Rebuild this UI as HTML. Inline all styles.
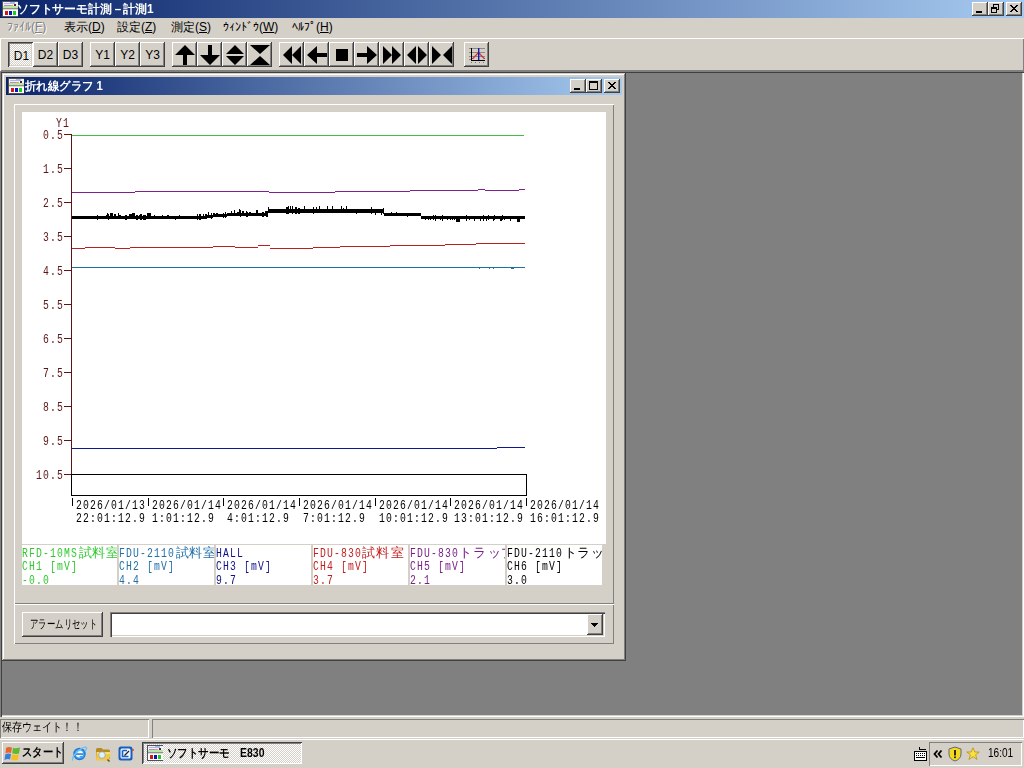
<!DOCTYPE html>
<html><head><meta charset="utf-8">
<style>
*{margin:0;padding:0;box-sizing:border-box}
html,body{width:1024px;height:768px;overflow:hidden;background:#D4D0C8;font-family:"Liberation Sans",sans-serif;font-size:12px;color:#000}
.a{position:absolute}
.face{background:#D4D0C8}
.btn{position:absolute;background:#D4D0C8;box-shadow:inset -1px -1px #404040,inset 1px 1px #fff,inset -2px -2px #808080,inset 2px 2px #D4D0C8}
.btnp{position:absolute;background-color:#fff;background-image:repeating-conic-gradient(#D4D0C8 0 25%,#fff 0 50%);background-size:2px 2px;box-shadow:inset 1px 1px #404040,inset -1px -1px #fff,inset 2px 2px #808080,inset -2px -2px #D4D0C8}
.tb{position:absolute;left:0;top:1px;width:25px;font-size:12px;line-height:25px;text-align:center}
.mono{font-family:"Liberation Mono",monospace;font-size:13px;letter-spacing:1.53px;white-space:pre;line-height:13px;transform:scaleX(0.75);transform-origin:0 0}
.tbtn{position:absolute;width:16px;height:14px;background:#D4D0C8;box-shadow:inset -1px -1px #404040,inset 1px 1px #fff,inset -2px -2px #808080}
.cell{top:545px;width:95px;height:40px;background:#fff;overflow:hidden;font-family:"Liberation Mono",monospace;font-size:13px;letter-spacing:1.53px;white-space:pre;line-height:13.5px}
.cell>div{transform:scaleX(0.75);transform-origin:0 0}
.j{display:inline-block;width:18.67px;text-align:center;letter-spacing:0;font-size:13px;font-weight:normal;transform:scaleX(1.333)}
.k{display:inline-block;width:1em;text-align:center}
.h{display:inline-block;width:0.5em;text-align:center}
</style></head><body>

<!-- main title bar -->
<div class="a" style="left:0;top:0;width:1024px;height:18px;background:linear-gradient(to right,#0A246A,#A6CAF0)"></div>
<div class="a" style="left:2px;top:1px;width:16px;height:16px"><svg width="16" height="16" viewBox="0 0 16 16" shape-rendering="crispEdges"><rect x="0" y="0" width="16" height="16" fill="#50505a"/><rect x="1" y="1" width="15" height="6" fill="#f4f0f8"/><rect x="2" y="2" width="6" height="1" fill="#c0b0e0"/><rect x="8" y="1" width="5" height="2" fill="#a8b8e8"/><rect x="2" y="4" width="6" height="1" fill="#a890c8"/><rect x="8" y="4" width="3" height="1" fill="#e0a060"/><rect x="12" y="3" width="2" height="2" fill="#502040"/><rect x="1" y="5" width="15" height="2" fill="#b8e8a8"/><rect x="1" y="7" width="15" height="1" fill="#909088"/><rect x="1" y="8" width="15" height="1" fill="#d8d8d0"/><rect x="1" y="9" width="15" height="6" fill="#fff"/><rect x="3" y="10" width="3" height="4" fill="#d01818"/><rect x="7" y="10" width="3" height="4" fill="#1010c0"/><rect x="11" y="10" width="3" height="4" fill="#18d018"/></svg></div>
<div class="a" style="left:17px;top:2px;height:14px;line-height:14px;color:#fff;font-weight:bold;font-size:12px;white-space:nowrap;transform:scaleX(0.985);transform-origin:0 0"><span class="k">ソ</span><span class="k">フ</span><span class="k">ト</span><span class="k">サ</span><span class="k">ー</span><span class="k">モ</span><span class="k">計</span><span class="k">測</span><span class="k">－</span><span class="k">計</span><span class="k">測</span>1</div>
<div class="tbtn" style="left:972px;top:2px"><svg class="a" style="left:0;top:0" width="16" height="14" shape-rendering="crispEdges"><rect x="4" y="9" width="6" height="2" fill="#000"/></svg></div>
<div class="tbtn" style="left:988px;top:2px"><svg class="a" style="left:0;top:0" width="16" height="14" shape-rendering="crispEdges"><path d="M5 2h6v1h-6zM5 3h1v2h-1zM10 3h1v5h-1zM9 7h1v1h-1z" fill="#000"/><path d="M3 5h6v2h-6zM3 7h1v4h-1zM8 7h1v4h-1zM3 10h6v1h-6z" fill="#000"/></svg></div>
<div class="tbtn" style="left:1006px;top:2px"><svg class="a" style="left:0;top:0" width="16" height="14" shape-rendering="crispEdges"><path d="M4 3h2v1h-2zM10 3h2v1h-2zM5 4h2v1h-2zM9 4h2v1h-2zM6 5h4v1h-4zM7 6h2v1h-2zM6 7h4v1h-4zM5 8h2v1h-2zM9 8h2v1h-2zM4 9h2v1h-2zM10 9h2v1h-2z" fill="#000"/></svg></div>

<!-- menu bar -->
<div class="a" style="left:0;top:18px;width:1024px;height:20px;background:#D4D0C8"></div>

<div class="a" style="left:7px;top:20px;height:14px;line-height:14px;white-space:nowrap;color:#808080;text-shadow:1px 1px #fff;font-size:12px"><span class="h">ﾌ</span><span class="h">ｧ</span><span class="h">ｲ</span><span class="h">ﾙ</span>(<u>F</u>)</div>
<div class="a" style="left:64px;top:20px;height:14px;line-height:14px;white-space:nowrap;font-size:12px"><span class="k">表</span><span class="k">示</span>(<u>D</u>)</div>
<div class="a" style="left:117px;top:20px;height:14px;line-height:14px;white-space:nowrap;font-size:12px"><span class="k">設</span><span class="k">定</span>(<u>Z</u>)</div>
<div class="a" style="left:171px;top:20px;height:14px;line-height:14px;white-space:nowrap;font-size:12px"><span class="k">測</span><span class="k">定</span>(<u>S</u>)</div>
<div class="a" style="left:223px;top:20px;height:14px;line-height:14px;white-space:nowrap;font-size:12px"><span class="h">ｳ</span><span class="h">ｨ</span><span class="h">ﾝ</span><span class="h">ﾄ</span><span class="h">ﾞ</span><span class="h">ｳ</span>(<u>W</u>)</div>
<div class="a" style="left:292px;top:20px;height:14px;line-height:14px;white-space:nowrap;font-size:12px"><span class="h">ﾍ</span><span class="h">ﾙ</span><span class="h">ﾌ</span><span class="h">ﾟ</span>(<u>H</u>)</div>
<!-- toolbar -->
<div class="a" style="left:0;top:38px;width:1024px;height:33px;background:#D4D0C8;box-shadow:inset 1px 1px #fff,inset -1px -1px #808080"></div>

<div class="btnp" style="left:8px;top:42px;width:25px;height:25px"><div class="tb" style="left:1px;top:2px">D1</div></div>
<div class="btn" style="left:33px;top:42px;width:25px;height:25px"><div class="tb">D2</div></div>
<div class="btn" style="left:58px;top:42px;width:25px;height:25px"><div class="tb">D3</div></div>
<div class="btn" style="left:90px;top:42px;width:25px;height:25px"><div class="tb">Y1</div></div>
<div class="btn" style="left:115px;top:42px;width:25px;height:25px"><div class="tb">Y2</div></div>
<div class="btn" style="left:140px;top:42px;width:25px;height:25px"><div class="tb">Y3</div></div>
<div class="btn" style="left:172px;top:42px;width:25px;height:25px"><svg class="a" style="left:0;top:0" width="25" height="25" viewBox="0 0 25 25"><path d="M3 13L13 3L23 13Z M11 13H15V23H11Z" fill="#000"/></svg></div>
<div class="btn" style="left:197px;top:42px;width:25px;height:25px"><svg class="a" style="left:0;top:0" width="25" height="25" viewBox="0 0 25 25"><path d="M11 3H15V13H11Z M3 13H23L13 23Z" fill="#000"/></svg></div>
<div class="btn" style="left:222px;top:42px;width:25px;height:25px"><svg class="a" style="left:0;top:0" width="25" height="25" viewBox="0 0 25 25"><path d="M4 12L13 3L22 12Z M4 14H22L13 23Z" fill="#000"/></svg></div>
<div class="btn" style="left:247px;top:42px;width:25px;height:25px"><svg class="a" style="left:0;top:0" width="25" height="25" viewBox="0 0 25 25"><path d="M3 3H23L13 12Z M13 14L23 23H3Z" fill="#000"/></svg></div>
<div class="btn" style="left:279px;top:42px;width:25px;height:25px"><svg class="a" style="left:0;top:0" width="25" height="25" viewBox="0 0 25 25"><path d="M4 13L13 4V22Z M13 13L22 4V22Z" fill="#000"/></svg></div>
<div class="btn" style="left:304px;top:42px;width:25px;height:25px"><svg class="a" style="left:0;top:0" width="25" height="25" viewBox="0 0 25 25"><path d="M3 13L13 4V22Z M13 11H23V15H13Z" fill="#000"/></svg></div>
<div class="btn" style="left:329px;top:42px;width:25px;height:25px"><svg class="a" style="left:0;top:0" width="25" height="25" viewBox="0 0 25 25"><rect x="7" y="7" width="12" height="12" fill="#000"/></svg></div>
<div class="btn" style="left:354px;top:42px;width:25px;height:25px"><svg class="a" style="left:0;top:0" width="25" height="25" viewBox="0 0 25 25"><path d="M3 11H13V15H3Z M13 4L23 13L13 22Z" fill="#000"/></svg></div>
<div class="btn" style="left:379px;top:42px;width:25px;height:25px"><svg class="a" style="left:0;top:0" width="25" height="25" viewBox="0 0 25 25"><path d="M4 4L13 13L4 22Z M13 4L22 13L13 22Z" fill="#000"/></svg></div>
<div class="btn" style="left:404px;top:42px;width:25px;height:25px"><svg class="a" style="left:0;top:0" width="25" height="25" viewBox="0 0 25 25"><path d="M3 13L12 4V22Z M14 4L23 13L14 22Z" fill="#000"/></svg></div>
<div class="btn" style="left:429px;top:42px;width:25px;height:25px"><svg class="a" style="left:0;top:0" width="25" height="25" viewBox="0 0 25 25"><path d="M3 4L12 13L3 22Z M23 4V22L14 13Z" fill="#000"/></svg></div>
<div class="btn" style="left:464px;top:42px;width:25px;height:25px"><svg class="a" style="left:0;top:0" width="25" height="25" viewBox="0 0 25 25"><g shape-rendering="crispEdges"><rect x="5" y="6" width="16" height="1" fill="#8a8a80"/><rect x="5" y="10" width="16" height="1" fill="#8a8a80"/><rect x="5" y="14" width="16" height="1" fill="#8a8a80"/><rect x="5" y="17" width="2" height="1" fill="#8a8a80"/><rect x="7" y="6" width="1" height="13" fill="#000"/><rect x="7" y="18" width="14" height="1" fill="#000"/><rect x="7" y="20" width="1" height="1" fill="#777"/><rect x="11" y="20" width="1" height="1" fill="#777"/><rect x="15" y="20" width="1" height="1" fill="#777"/><rect x="19" y="20" width="1" height="1" fill="#777"/></g><path d="M8 16.5H9L14.5 10.5L20 16.5H21" stroke="#d03040" stroke-width="1.2" fill="none"/><rect x="14" y="6" width="1.4" height="12" fill="#1818b0"/></svg></div>
<!-- MDI client -->
<div class="a" style="left:0;top:71px;width:1024px;height:646px;background:#808080;box-shadow:inset 1px 1px #808080,inset 2px 2px #404040,inset -1px -1px #fff,inset -2px -2px #D4D0C8"></div>

<!-- child window -->
<div class="a" style="left:2px;top:73px;width:624px;height:588px;background:#D4D0C8;box-shadow:inset -1px -1px #404040,inset 1px 1px #D4D0C8,inset -2px -2px #808080,inset 2px 2px #fff"></div>
<div class="a" style="left:6px;top:77px;width:616px;height:18px;background:linear-gradient(to right,#0A246A,#A6CAF0)"></div>

<div class="a" style="left:8px;top:78px;width:16px;height:16px"><svg width="16" height="16" viewBox="0 0 16 16" shape-rendering="crispEdges"><rect x="0" y="0" width="16" height="16" fill="#50505a"/><rect x="1" y="1" width="15" height="6" fill="#f4f0f8"/><rect x="2" y="2" width="6" height="1" fill="#c0b0e0"/><rect x="8" y="1" width="5" height="2" fill="#a8b8e8"/><rect x="2" y="4" width="6" height="1" fill="#a890c8"/><rect x="8" y="4" width="3" height="1" fill="#e0a060"/><rect x="12" y="3" width="2" height="2" fill="#502040"/><rect x="1" y="5" width="15" height="2" fill="#b8e8a8"/><rect x="1" y="7" width="15" height="1" fill="#909088"/><rect x="1" y="8" width="15" height="1" fill="#d8d8d0"/><rect x="1" y="9" width="15" height="6" fill="#fff"/><rect x="3" y="10" width="3" height="4" fill="#d01818"/><rect x="7" y="10" width="3" height="4" fill="#1010c0"/><rect x="11" y="10" width="3" height="4" fill="#18d018"/></svg></div>
<div class="a" style="left:25px;top:79px;height:14px;line-height:14px;color:#fff;font-weight:bold;font-size:12px;white-space:nowrap;transform:scaleX(0.95);transform-origin:0 0"><span class="k">折</span><span class="k">れ</span><span class="k">線</span><span class="k">グ</span><span class="k">ラ</span><span class="k">フ</span> 1</div>
<div class="tbtn" style="left:570px;top:79px"><svg class="a" style="left:0;top:0" width="16" height="14" shape-rendering="crispEdges"><rect x="4" y="9" width="6" height="2" fill="#000"/></svg></div>
<div class="tbtn" style="left:586px;top:79px"><svg class="a" style="left:0;top:0" width="16" height="14" shape-rendering="crispEdges"><path d="M3 2h9v2h-9zM3 4h1v7h-1zM11 4h1v7h-1zM3 10h9v1h-9z" fill="#000"/></svg></div>
<div class="tbtn" style="left:604px;top:79px"><svg class="a" style="left:0;top:0" width="16" height="14" shape-rendering="crispEdges"><path d="M4 3h2v1h-2zM10 3h2v1h-2zM5 4h2v1h-2zM9 4h2v1h-2zM6 5h4v1h-4zM7 6h2v1h-2zM6 7h4v1h-4zM5 8h2v1h-2zM9 8h2v1h-2zM4 9h2v1h-2zM10 9h2v1h-2z" fill="#000"/></svg></div>
<!-- chart panel -->
<div class="a" style="left:14px;top:104px;width:600px;height:500px;box-shadow:inset 1px 1px #fff,inset -1px -1px #808080"></div>
<div class="a" style="left:22px;top:112px;width:584px;height:432px;background:#fff"></div>
<div class="a" style="left:22px;top:544px;width:584px;height:41px;background:#D4D0C8"></div>
<svg class="a" style="left:0;top:0" width="1024" height="768" shape-rendering="crispEdges">
<rect x="71" y="134" width="1" height="341" fill="#5C1414"/>
<rect x="64" y="134" width="7" height="1" fill="#5C1414"/>
<rect x="64" y="168" width="7" height="1" fill="#5C1414"/>
<rect x="64" y="202" width="7" height="1" fill="#5C1414"/>
<rect x="64" y="236" width="7" height="1" fill="#5C1414"/>
<rect x="64" y="270" width="7" height="1" fill="#5C1414"/>
<rect x="64" y="304" width="7" height="1" fill="#5C1414"/>
<rect x="64" y="338" width="7" height="1" fill="#5C1414"/>
<rect x="64" y="372" width="7" height="1" fill="#5C1414"/>
<rect x="64" y="406" width="7" height="1" fill="#5C1414"/>
<rect x="64" y="440" width="7" height="1" fill="#5C1414"/>
<rect x="64" y="474" width="7" height="1" fill="#5C1414"/>
<rect x="71" y="474" width="456" height="1" fill="#000"/>
<rect x="71" y="495" width="456" height="1" fill="#000"/>
<rect x="71" y="474" width="1" height="22" fill="#000"/>
<rect x="526" y="474" width="1" height="22" fill="#000"/>
<rect x="72" y="498" width="1" height="8" fill="#000"/>
<rect x="148" y="498" width="1" height="8" fill="#000"/>
<rect x="223" y="498" width="1" height="8" fill="#000"/>
<rect x="299" y="498" width="1" height="8" fill="#000"/>
<rect x="375" y="498" width="1" height="8" fill="#000"/>
<rect x="450" y="498" width="1" height="8" fill="#000"/>
<rect x="526" y="498" width="1" height="8" fill="#000"/>
<rect x="72" y="135" width="452" height="1" fill="#40C040"/>
<rect x="72" y="267" width="453" height="1" fill="#2070A0"/><rect x="479" y="268" width="1" height="1" fill="#2070A0"/><rect x="489" y="268" width="1" height="1" fill="#2070A0"/><rect x="493" y="268" width="1" height="1" fill="#2070A0"/><rect x="511" y="268" width="3" height="1" fill="#2070A0"/>
<rect x="72" y="448" width="425" height="1" fill="#101890"/><rect x="497" y="447" width="28" height="1" fill="#101890"/>
<g fill="#802090"><rect x="72" y="192" width="63" height="1"/><rect x="135" y="191" width="134" height="1"/><rect x="269" y="192" width="66" height="1"/><rect x="335" y="191" width="75" height="1"/><rect x="410" y="190" width="68" height="1"/><rect x="478" y="189" width="7" height="1"/><rect x="485" y="190" width="34" height="1"/><rect x="519" y="189" width="6" height="1"/></g><g fill="#B82020"><rect x="72" y="248" width="13" height="1"/><rect x="85" y="247" width="30" height="1"/><rect x="115" y="248" width="15" height="1"/><rect x="130" y="247" width="83" height="1"/><rect x="213" y="246" width="22" height="1"/><rect x="235" y="247" width="23" height="1"/><rect x="258" y="245" width="12" height="1"/><rect x="270" y="248" width="43" height="1"/><rect x="313" y="247" width="27" height="1"/><rect x="340" y="246" width="50" height="1"/><rect x="390" y="245" width="55" height="1"/><rect x="445" y="244" width="31" height="1"/><rect x="476" y="243" width="49" height="1"/></g><g fill="#000"><rect x="72" y="216" width="134" height="3"/><rect x="206" y="215" width="7" height="3"/><rect x="213" y="214" width="14" height="3"/><rect x="227" y="213" width="41" height="3"/><rect x="268" y="209" width="116" height="4"/><rect x="384" y="213" width="37" height="3"/><rect x="421" y="216" width="104" height="3"/><rect x="82" y="216" width="1" height="3"/><rect x="90" y="216" width="1" height="3"/><rect x="97" y="215" width="1" height="5"/><rect x="106" y="215" width="1" height="4"/><rect x="107" y="213" width="1" height="6"/><rect x="108" y="214" width="1" height="6"/><rect x="110" y="213" width="3" height="6"/><rect x="114" y="214" width="2" height="5"/><rect x="118" y="213" width="1" height="6"/><rect x="119" y="215" width="2" height="4"/><rect x="125" y="215" width="2" height="5"/><rect x="129" y="214" width="3" height="5"/><rect x="132" y="213" width="3" height="6"/><rect x="136" y="215" width="2" height="5"/><rect x="139" y="215" width="1" height="4"/><rect x="140" y="214" width="2" height="6"/><rect x="143" y="215" width="3" height="5"/><rect x="147" y="213" width="1" height="6"/><rect x="148" y="213" width="3" height="6"/><rect x="154" y="215" width="1" height="4"/><rect x="162" y="215" width="1" height="4"/><rect x="167" y="215" width="1" height="4"/><rect x="168" y="215" width="1" height="4"/><rect x="175" y="216" width="1" height="4"/><rect x="179" y="215" width="1" height="4"/><rect x="183" y="216" width="1" height="3"/><rect x="197" y="214" width="1" height="6"/><rect x="199" y="214" width="2" height="6"/><rect x="203" y="214" width="1" height="5"/><rect x="205" y="214" width="2" height="5"/><rect x="208" y="212" width="1" height="6"/><rect x="211" y="213" width="1" height="6"/><rect x="213" y="213" width="2" height="4"/><rect x="216" y="213" width="2" height="4"/><rect x="223" y="213" width="1" height="5"/><rect x="225" y="212" width="1" height="6"/><rect x="231" y="211" width="1" height="5"/><rect x="234" y="210" width="1" height="6"/><rect x="237" y="212" width="2" height="4"/><rect x="240" y="210" width="1" height="7"/><rect x="242" y="211" width="2" height="5"/><rect x="246" y="211" width="1" height="6"/><rect x="247" y="212" width="1" height="5"/><rect x="249" y="212" width="2" height="4"/><rect x="256" y="210" width="2" height="6"/><rect x="262" y="212" width="2" height="5"/><rect x="265" y="211" width="1" height="5"/><rect x="266" y="211" width="2" height="6"/><rect x="268" y="207" width="1" height="6"/><rect x="286" y="207" width="2" height="7"/><rect x="288" y="206" width="1" height="8"/><rect x="290" y="206" width="1" height="7"/><rect x="292" y="206" width="1" height="8"/><rect x="295" y="207" width="2" height="7"/><rect x="298" y="208" width="2" height="6"/><rect x="304" y="207" width="1" height="6"/><rect x="308" y="209" width="1" height="4"/><rect x="313" y="207" width="1" height="7"/><rect x="316" y="207" width="1" height="6"/><rect x="333" y="209" width="1" height="4"/><rect x="343" y="208" width="1" height="5"/><rect x="348" y="209" width="1" height="4"/><rect x="356" y="209" width="1" height="5"/><rect x="363" y="209" width="1" height="4"/><rect x="371" y="207" width="1" height="7"/><rect x="375" y="209" width="1" height="6"/><rect x="381" y="209" width="1" height="6"/><rect x="383" y="208" width="1" height="6"/><rect x="387" y="213" width="1" height="3"/><rect x="391" y="212" width="1" height="4"/><rect x="396" y="212" width="1" height="4"/><rect x="404" y="213" width="1" height="3"/><rect x="407" y="213" width="1" height="4"/><rect x="419" y="213" width="1" height="3"/><rect x="425" y="216" width="1" height="4"/><rect x="428" y="216" width="1" height="4"/><rect x="430" y="216" width="1" height="4"/><rect x="433" y="215" width="1" height="5"/><rect x="435" y="215" width="1" height="6"/><rect x="440" y="216" width="1" height="4"/><rect x="442" y="215" width="1" height="6"/><rect x="447" y="216" width="1" height="4"/><rect x="450" y="216" width="1" height="4"/><rect x="452" y="216" width="1" height="4"/><rect x="454" y="216" width="1" height="4"/><rect x="458" y="216" width="1" height="4"/><rect x="466" y="215" width="1" height="6"/><rect x="469" y="216" width="1" height="4"/><rect x="474" y="216" width="1" height="5"/><rect x="480" y="216" width="1" height="5"/><rect x="483" y="215" width="1" height="6"/><rect x="486" y="216" width="1" height="5"/><rect x="488" y="215" width="1" height="5"/><rect x="494" y="215" width="1" height="5"/><rect x="501" y="216" width="1" height="5"/><rect x="502" y="215" width="1" height="5"/><rect x="504" y="216" width="1" height="4"/><rect x="510" y="216" width="1" height="5"/><rect x="239" y="209" width="1" height="5"/><rect x="304" y="206" width="1" height="4"/><rect x="319" y="206" width="1" height="4"/><rect x="327" y="206" width="1" height="4"/><rect x="332" y="206" width="1" height="4"/><rect x="341" y="206" width="1" height="4"/><rect x="346" y="206" width="1" height="4"/><rect x="456" y="216" width="4" height="6"/><rect x="517" y="216" width="3" height="6"/><rect x="493" y="216" width="1" height="5"/><rect x="500" y="216" width="1" height="5"/></g></svg>
<div class="a mono" style="left:43px;top:129px;color:#5C1414">0.5</div>
<div class="a mono" style="left:43px;top:163px;color:#5C1414">1.5</div>
<div class="a mono" style="left:43px;top:197px;color:#5C1414">2.5</div>
<div class="a mono" style="left:43px;top:231px;color:#5C1414">3.5</div>
<div class="a mono" style="left:43px;top:265px;color:#5C1414">4.5</div>
<div class="a mono" style="left:43px;top:299px;color:#5C1414">5.5</div>
<div class="a mono" style="left:43px;top:333px;color:#5C1414">6.5</div>
<div class="a mono" style="left:43px;top:367px;color:#5C1414">7.5</div>
<div class="a mono" style="left:43px;top:401px;color:#5C1414">8.5</div>
<div class="a mono" style="left:43px;top:435px;color:#5C1414">9.5</div>
<div class="a mono" style="left:36px;top:469px;color:#5C1414">10.5</div>
<div class="a mono" style="left:56px;top:117px;color:#5C1414">Y1</div>
<div class="a mono" style="left:76px;top:499px">2026/01/13<br>22:01:12.9</div>
<div class="a mono" style="left:152px;top:499px">2026/01/14<br>1:01:12.9</div>
<div class="a mono" style="left:227px;top:499px">2026/01/14<br>4:01:12.9</div>
<div class="a mono" style="left:303px;top:499px">2026/01/14<br>7:01:12.9</div>
<div class="a mono" style="left:379px;top:499px">2026/01/14<br>10:01:12.9</div>
<div class="a mono" style="left:454px;top:499px">2026/01/14<br>13:01:12.9</div>
<div class="a mono" style="left:530px;top:499px">2026/01/14<br>16:01:12.9</div>
<div class="a cell" style="left:22px;color:#30C830"><div class="a" style="left:0;top:2px">RFD-10MS<span class="j">試</span><span class="j">料</span><span class="j">室</span></div><div class="a" style="left:0;top:15px">CH1 [mV]</div><div class="a" style="left:0;top:29px">-0.0</div></div>
<div class="a cell" style="left:119px;color:#2070A8"><div class="a" style="left:0;top:2px">FDU-2110<span class="j">試</span><span class="j">料</span><span class="j">室</span></div><div class="a" style="left:0;top:15px">CH2 [mV]</div><div class="a" style="left:0;top:29px">4.4</div></div>
<div class="a cell" style="left:216px;color:#101088"><div class="a" style="left:0;top:2px">HALL</div><div class="a" style="left:0;top:15px">CH3 [mV]</div><div class="a" style="left:0;top:29px">9.7</div></div>
<div class="a cell" style="left:313px;color:#C02020"><div class="a" style="left:0;top:2px">FDU-830<span class="j">試</span><span class="j">料</span><span class="j">室</span></div><div class="a" style="left:0;top:15px">CH4 [mV]</div><div class="a" style="left:0;top:29px">3.7</div></div>
<div class="a cell" style="left:410px;color:#782088"><div class="a" style="left:0;top:2px">FDU-830<span class="j">ト</span><span class="j">ラ</span><span class="j">ッ</span><span class="j">プ</span></div><div class="a" style="left:0;top:15px">CH5 [mV]</div><div class="a" style="left:0;top:29px">2.1</div></div>
<div class="a cell" style="left:507px;color:#000000"><div class="a" style="left:0;top:2px">FDU-2110<span class="j">ト</span><span class="j">ラ</span><span class="j">ッ</span><span class="j">プ</span></div><div class="a" style="left:0;top:15px">CH6 [mV]</div><div class="a" style="left:0;top:29px">3.0</div></div>
<!-- bottom panel -->
<div class="a" style="left:14px;top:604px;width:600px;height:40px;box-shadow:inset 1px 1px #fff,inset -1px -1px #808080"></div>
<div class="btn" style="left:22px;top:612px;width:81px;height:25px"><div class="a" style="left:8px;top:0;line-height:24px;font-size:12px;white-space:nowrap;transform:scaleX(0.7);transform-origin:0 0"><span class="k">ア</span><span class="k">ラ</span><span class="k">ー</span><span class="k">ム</span><span class="k">リ</span><span class="k">セ</span><span class="k">ッ</span><span class="k">ト</span></div></div>
<div class="a" style="left:110px;top:612px;width:495px;height:25px;background:#fff;box-shadow:inset 1px 1px #808080,inset 2px 2px #404040,inset -1px -1px #fff,inset -2px -2px #D4D0C8"></div>
<div class="btn" style="left:587px;top:614px;width:16px;height:21px"><svg class="a" style="left:0;top:0" width="16" height="21" shape-rendering="crispEdges"><path d="M4 9h7v1h-7zM5 10h5v1h-5zM6 11h3v1h-3zM7 12h1v1h-1z" fill="#000"/></svg></div>
<!-- status bar -->
<div class="a" style="left:0;top:717px;width:1024px;height:21px;background:#D4D0C8"></div>
<div class="a" style="left:0;top:719px;width:149px;height:19px;box-shadow:inset 1px 1px #808080,inset -1px -1px #fff"></div>
<div class="a" style="left:152px;top:719px;width:872px;height:19px;box-shadow:inset 1px 1px #808080,inset -1px -1px #fff"></div>
<div class="a" style="left:2px;top:720px;height:14px;line-height:14px;font-size:12px;white-space:nowrap;transform:scaleX(0.84);transform-origin:0 0"><span class="k">保</span><span class="k">存</span><span class="k">ウ</span><span class="k">ェ</span><span class="k">イ</span><span class="k">ト</span><span class="k">！</span><span class="k">！</span></div>

<!-- taskbar -->
<div class="a" style="left:0;top:738px;width:1024px;height:30px;background:#D4D0C8;box-shadow:inset 0 1px #D4D0C8,inset 0 2px #fff"></div>
<div class="btn" style="left:2px;top:742px;width:62px;height:22px;box-shadow:inset -1px -1px #404040,inset 1px 1px #fff,inset -2px -2px #808080"></div>
<div class="a" style="left:4px;top:745px;width:18px;height:16px"><svg width="18" height="16" viewBox="0 0 18 16"><path d="M2 3Q4 1.5 8 2.5L7 8Q4 7 1.5 8.5Z" fill="#E8652A"/><path d="M9 2.8Q12 4 16 2.5L15 8.5Q12 9.5 8.2 8.3Z" fill="#60B830"/><path d="M1.3 9.5Q4 8 7 9L6 14.5Q3.5 13.5 0.5 15Z" fill="#3A7CE0"/><path d="M8 9.3Q11.5 10.5 14.8 9.3L14 15Q10.5 16 7 14.5Z" fill="#F4C020"/></svg></div>
<div class="a" style="left:22px;top:744px;height:16px;line-height:16px;font-weight:bold;font-size:12px;white-space:nowrap;transform:scaleX(0.86);transform-origin:0 0"><span class="k">ス</span><span class="k">タ</span><span class="k">ー</span><span class="k">ト</span></div>
<div class="a" style="left:71px;top:745px;width:17px;height:17px"><svg width="17" height="17" viewBox="0 0 17 17"><circle cx="8.5" cy="9" r="6.2" fill="#1E78D0"/><circle cx="8.5" cy="9" r="5" fill="#3AA0F0"/><path d="M4.5 9.2h8A4 4 0 1 0 11.8 11.5H9.5A1.8 1.8 0 0 1 6.8 10.8H12.6" fill="none"/><circle cx="8.5" cy="9" r="3.6" fill="#F4FAFF"/><rect x="5" y="8.3" width="7" height="1.5" fill="#1E78D0"/><path d="M8.7 10.9h4.5v1.6h-4.5z" fill="#3AA0F0"/><path d="M1.8 15.5Q0.5 12.5 6 7Q12 1.5 15 2.2Q16.5 3.5 13.8 6.5" stroke="#6EC0F8" stroke-width="1.4" fill="none"/></svg></div>
<div class="a" style="left:95px;top:746px;width:17px;height:16px"><svg width="17" height="16" viewBox="0 0 17 16"><path d="M1 3.5Q1 2 2.5 2h4l1.5 1.5h5.5Q15 3.5 15 5v8H1Z" fill="#B88A20"/><path d="M1.5 6h14.5l-2 8.5H1Z" fill="#F0C850"/><path d="M2 6.5h13.5l-0.3 1.2H2Z" fill="#FFE890"/><circle cx="7" cy="9" r="3.3" fill="#DDF2FA" stroke="#8A9AA0" stroke-width="0.7"/><path d="M12.5 13.5l2 2" stroke="#6a4a10" stroke-width="1.4"/></svg></div>
<div class="a" style="left:118px;top:745px;width:16px;height:17px"><svg width="16" height="17" viewBox="0 0 16 17"><rect x="0.5" y="1.5" width="14" height="14" rx="2.5" fill="#1A5EC0"/><rect x="2.5" y="3.5" width="10" height="10" rx="1.5" fill="#F0F8FF"/><path d="M4.5 5.5h4.5M4.5 5.5v6h6" stroke="#1A5EC0" stroke-width="1.6" fill="none"/><path d="M6.5 10.5l4.5-4.5" stroke="#202020" stroke-width="1.3"/><circle cx="15" cy="5" r="0.9" fill="#D04020"/></svg></div>
<div class="btnp" style="left:142px;top:742px;width:160px;height:22px;box-shadow:inset 1px 1px #404040,inset -1px -1px #fff,inset 2px 2px #808080"></div>
<div class="a" style="left:147px;top:745px;width:16px;height:16px"><svg width="16" height="16" viewBox="0 0 16 16" shape-rendering="crispEdges"><rect x="0" y="0" width="16" height="16" fill="#50505a"/><rect x="1" y="1" width="15" height="6" fill="#f4f0f8"/><rect x="2" y="2" width="6" height="1" fill="#c0b0e0"/><rect x="8" y="1" width="5" height="2" fill="#a8b8e8"/><rect x="2" y="4" width="6" height="1" fill="#a890c8"/><rect x="8" y="4" width="3" height="1" fill="#e0a060"/><rect x="12" y="3" width="2" height="2" fill="#502040"/><rect x="1" y="5" width="15" height="2" fill="#b8e8a8"/><rect x="1" y="7" width="15" height="1" fill="#909088"/><rect x="1" y="8" width="15" height="1" fill="#d8d8d0"/><rect x="1" y="9" width="15" height="6" fill="#fff"/><rect x="3" y="10" width="3" height="4" fill="#d01818"/><rect x="7" y="10" width="3" height="4" fill="#1010c0"/><rect x="11" y="10" width="3" height="4" fill="#18d018"/></svg></div>
<div class="a" style="left:167px;top:745px;height:16px;line-height:16px;font-weight:bold;font-size:12px;white-space:nowrap;transform:scaleX(0.87);transform-origin:0 0"><span class="k">ソ</span><span class="k">フ</span><span class="k">ト</span><span class="k">サ</span><span class="k">ー</span><span class="k">モ</span><span class="k">　</span>E830</div>
<div class="a" style="left:913px;top:746px;width:14px;height:16px"><svg width="14" height="16" viewBox="0 0 14 16" shape-rendering="crispEdges"><path d="M6 1h1v3h-1zM7 3h6v1h-6z" fill="#000"/><rect x="1" y="5" width="12" height="9" fill="#fff" stroke="#000" stroke-width="1"/><g fill="#000"><rect x="3" y="7" width="1" height="1"/><rect x="5" y="7" width="1" height="1"/><rect x="7" y="7" width="1" height="1"/><rect x="9" y="7" width="1" height="1"/><rect x="11" y="7" width="1" height="1"/><rect x="3" y="9" width="1" height="1"/><rect x="5" y="9" width="1" height="1"/><rect x="7" y="9" width="1" height="1"/><rect x="9" y="9" width="1" height="1"/><rect x="11" y="9" width="1" height="1"/><rect x="3" y="11" width="9" height="1"/></g></svg></div>
<div class="a" style="left:929px;top:742px;width:93px;height:24px;box-shadow:inset 1px 1px #808080,inset -1px -1px #fff"></div>
<svg class="a" style="left:933px;top:749px" width="10" height="10" viewBox="0 0 10 10"><path d="M4.5 1.5L1.5 5L4.5 8.5M8.5 1.5L5.5 5L8.5 8.5" stroke="#000" stroke-width="1.8" fill="none"/></svg>
<div class="a" style="left:948px;top:746px;width:14px;height:16px"><svg width="14" height="16" viewBox="0 0 14 16"><path d="M7 1L13 3V8Q13 13 7 15Q1 13 1 8V3Z" fill="#F2D820" stroke="#606878" stroke-width="1"/><rect x="6.2" y="4" width="1.6" height="5.5" fill="#000"/><rect x="6.2" y="10.5" width="1.6" height="1.6" fill="#000"/></svg></div>
<div class="a" style="left:966px;top:747px;width:14px;height:14px"><svg width="14" height="14" viewBox="0 0 14 14"><path d="M7 0.8L8.8 5H13.2L9.6 7.8L11 12.5L7 9.6L3 12.5L4.4 7.8L0.8 5H5.2Z" fill="#F8E040" stroke="#B89010" stroke-width="0.8"/></svg></div>
<div class="a" style="left:988px;top:745px;height:16px;line-height:16px;font-size:12px;transform:scaleX(0.84);transform-origin:0 0">16:01</div>

</body></html>
